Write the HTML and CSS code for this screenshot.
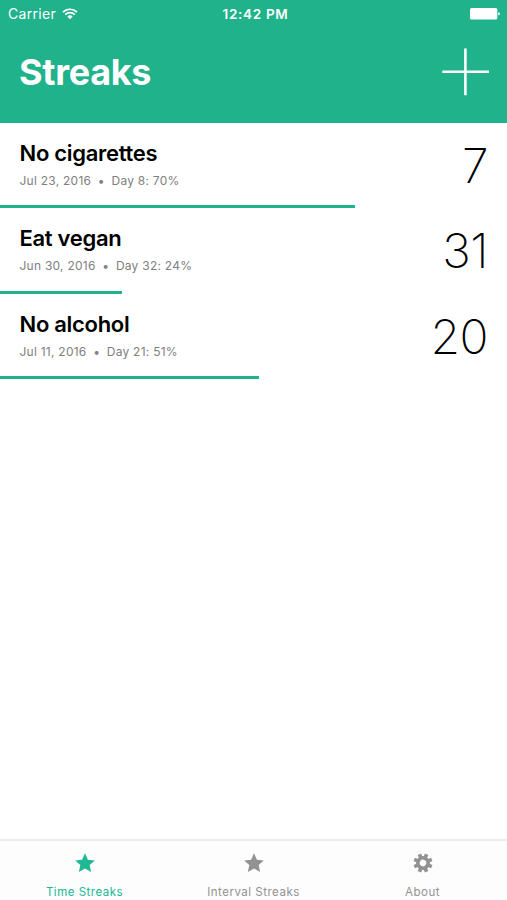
FILE: index.html
```html
<!DOCTYPE html>
<html lang="en">
<head>
  <meta charset="UTF-8">
  <title>Streaks</title>
  <link rel="stylesheet" href="styles.css">
</head>
<body>

  <!-- Header -->
  <header class="header">
    <div class="status-bar">
      <div class="carrier">
        <span>Carrier</span>
        <svg class="wifi" viewBox="0 0 16 12" width="16" height="12">
          <path d="M1 4.1A10 10 0 0 1 15 4.1M3.2 6.6A6.8 6.8 0 0 1 12.8 6.6" fill="none" stroke="#fff" stroke-width="1.7"/>
          <path d="M5.3 8.6A4 4 0 0 1 10.7 8.6L8 11.3Z" fill="#fff"/>
        </svg>
      </div>
      <span class="time">12:42 PM</span>
      <svg class="battery" viewBox="0 0 30 12" width="30" height="12">
        <rect x="0" y="0" width="27.3" height="11.4" rx="1.5" fill="#fff"/>
        <path d="M28.2 4.2Q30 4.5 30 5.8T28.2 7.4Z" fill="#fff"/>
      </svg>
    </div>
    <div class="title-bar">
      <h1>Streaks</h1>
      <svg class="add" viewBox="0 0 48 48" width="48" height="48">
        <path d="M24.4 0.5V47.2M1.3 23.8H48" stroke="#fff" stroke-width="2.6"/>
      </svg>
    </div>
  </header>

  <!-- Streak list -->
  <main class="streaks">
    <div class="streak">
      <div class="info">
        <h2>No cigarettes</h2>
        <p>Jul 23, 2016 <span class="dot">•</span> Day 8: 70%</p>
      </div>
      <div class="count">7</div>
      <div class="progress" style="width: 70%"></div>
    </div>
    <div class="streak">
      <div class="info">
        <h2>Eat vegan</h2>
        <p>Jun 30, 2016 <span class="dot">•</span> Day 32: 24%</p>
      </div>
      <div class="count">31</div>
      <div class="progress" style="width: 24%"></div>
    </div>
    <div class="streak">
      <div class="info">
        <h2>No alcohol</h2>
        <p>Jul 11, 2016 <span class="dot">•</span> Day 21: 51%</p>
      </div>
      <div class="count">20</div>
      <div class="progress" style="width: 51%"></div>
    </div>
  </main>

  <!-- Tab bar -->
  <nav class="tabs">
    <div class="tab active">
      <svg viewBox="0 0 20 20" width="20" height="20">
        <path d="M10 0.3L12.9 6.7L19.8 7.5L14.7 12.1L16.1 19L10 15.6L3.9 19L5.3 12.1L0.2 7.5L7.1 6.7Z"/>
      </svg>
      <span>Time Streaks</span>
    </div>
    <div class="tab">
      <svg viewBox="0 0 20 20" width="20" height="20">
        <path d="M10 0.3L12.9 6.7L19.8 7.5L14.7 12.1L16.1 19L10 15.6L3.9 19L5.3 12.1L0.2 7.5L7.1 6.7Z"/>
      </svg>
      <span>Interval Streaks</span>
    </div>
    <div class="tab">
      <svg viewBox="0 0 20 20" width="20" height="20">
        <g transform="rotate(22.5 10 10)">
          <circle cx="10" cy="10" r="5.1" fill="none" stroke="currentColor" stroke-width="3.6"/>
          <path d="M10 0.5V5M10 15V19.5M0.5 10H5M15 10H19.5M3.3 3.3L6.5 6.5M13.5 13.5L16.7 16.7M3.3 16.7L6.5 13.5M13.5 6.5L16.7 3.3" stroke="currentColor" stroke-width="3.7"/>
        </g>
      </svg>
      <span>About</span>
    </div>
  </nav>

</body>
</html>
```
FILE: styles.css
```css
* {
  box-sizing: border-box;
}

body {
  margin: 0;
  height: 900px;
  display: flex;
  flex-direction: column;
  background: #fff;
  color: #000;
  font-family: Inter, "Liberation Sans", sans-serif;
}

h1, h2, p {
  margin: 0;
}

svg {
  display: block;
}

/* Header */
.header {
  height: 123px;
  background: #20b28a;
  color: #fff;
}

.status-bar {
  display: grid;
  grid-template-columns: 1fr auto 1fr;
  align-items: center;
  height: 27px;
  padding: 0 7px 0 8px;
  font-size: 14px;
}

.carrier {
  display: flex;
  align-items: center;
  gap: 6px;
  letter-spacing: 0.3px;
}

.time {
  padding-left: 3px;
  font-size: 13.5px;
  font-weight: 600;
  letter-spacing: 0.7px;
}

.battery {
  justify-self: end;
}

.title-bar {
  display: flex;
  justify-content: space-between;
  align-items: center;
  height: 90px;
  padding: 0 18px 0 19px;
}

h1 {
  font-size: 36px;
  font-weight: 700;
  letter-spacing: -0.3px;
}

/* Streak list */
.streaks {
  flex: 1;
}

.streak {
  display: grid;
  grid-template-columns: 1fr auto;
  grid-template-rows: 82.3px 3.2px;
}

.info {
  padding: 16px 0 0 19.5px;
}

h2 {
  font-size: 22px;
  font-weight: 600;
  line-height: 28px;
  letter-spacing: -0.3px;
}

p {
  margin-top: 6px;
  color: #808080;
  font-size: 12px;
  line-height: 16px;
  letter-spacing: 0.25px;
}

.dot {
  margin: 0 3px;
}

.count {
  padding: 13px 19px 0 0;
  font-size: 48px;
  font-weight: 200;
  line-height: 60px;
  letter-spacing: -0.5px;
}

.progress {
  grid-column: 1 / 3;
  background: #20b28a;
}

/* Tab bar */
.tabs {
  display: flex;
  height: 61px;
  border-top: 2px solid #ebebeb;
  background: #fdfdfd;
}

.tab {
  flex: 1;
  display: flex;
  flex-direction: column;
  align-items: center;
  gap: 11px;
  padding-top: 12px;
  color: #929292;
  fill: #929292;
  font-size: 11.5px;
  line-height: 16px;
  letter-spacing: 0.5px;
}

.active {
  color: #20b895;
  fill: #20b895;
}
```
